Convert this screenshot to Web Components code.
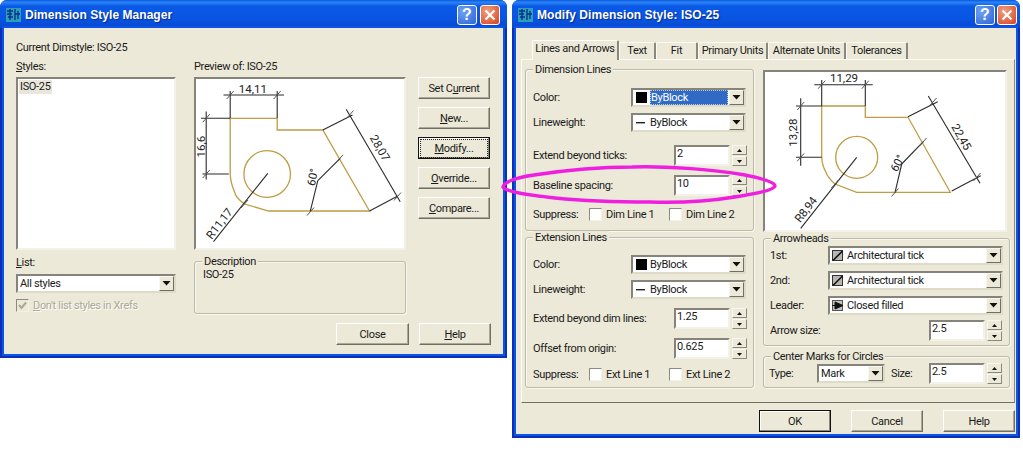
<!DOCTYPE html>
<html lang="en"><head><meta charset="utf-8"><title>Dimension Style</title>
<style>
html,body{margin:0;padding:0;background:#fff;width:1023px;height:451px;overflow:hidden;font:11px Roboto,"Liberation Sans",Arial,sans-serif;letter-spacing:-.33px;color:#1a1a1a}
</style></head><body>
<manager-dialog></manager-dialog>
<modify-dialog></modify-dialog>
<pink-ellipse></pink-ellipse>
<script>
function def(name, css, html, after){
  customElements.define(name, class extends HTMLElement{
    constructor(){super();this.attachShadow({mode:'open'});}
    connectedCallback(){
      if(this._done)return;this._done=true;
      this.shadowRoot.innerHTML='<style>'+css+'</style>'+(typeof html==='function'?html(this):html);
      if(after)after(this);
    }
  });
}
const ARROW='<svg width="9" height="5" viewBox="0 0 9 5"><path d="M0.5 0H8.5L4.5 4.5Z" fill="#111"/></svg>';
const ICONS={
 swatch:'<svg width="13" height="13"><rect x="1" y="1" width="11" height="11" fill="#000"/></svg>',
 line:'<svg width="13" height="13"><rect x="1" y="6" width="9" height="1.4" fill="#222"/></svg>',
 tick:'<svg width="13" height="13"><rect x=".5" y="1.5" width="10" height="10" fill="#b9b7b4" stroke="#333"/><path d="M1 11.5 10.5 2" stroke="#111" stroke-width="1.6"/></svg>',
 arrow:'<svg width="13" height="13"><rect x=".5" y="1.5" width="10" height="10" fill="#c4c2bc" stroke="#555"/><path d="M0 6.5H3M3 3 11 6.5 3 10Z" fill="#111" stroke="#111"/></svg>'
};
def('x-window',`
:host{display:block;position:absolute;box-sizing:border-box;background:#0a30b8;border-radius:7px 7px 0 0;overflow:hidden}
.bar{height:28px;display:flex;align-items:center;padding:1px var(--bar-right,3px) 0 6px;box-sizing:border-box;background:linear-gradient(180deg,#0a58e0 0,#2b84f6 8%,#0a5ae6 22%,#0854e2 70%,#0b46cd 100%);color:#fff;font:bold 12px "Liberation Sans",sans-serif;letter-spacing:.05px;text-shadow:1px 1px 1px #0a2a90}
.ico{width:15px;height:14px;margin-right:4px;flex:none;display:block}
.ttl{flex:1;white-space:nowrap}
.tb{width:20px;height:20px;border-radius:3px;border:1px solid #fff;box-sizing:border-box;margin-left:var(--bar-gap,2px);display:flex;align-items:center;justify-content:center;flex:none;font:bold 16px "Liberation Sans",sans-serif;color:#fff;text-shadow:none;background:radial-gradient(circle at 30% 30%,#6ea2f2,#2e64d8)}
.tb.x{background:radial-gradient(circle at 35% 30%,#f0a080,#d8421e)}
.body{position:absolute;left:4px;right:4px;top:28px;bottom:4px;background:#ece9d8;box-shadow:0 0 0 2px #0a55e6}
`,h=>`<div class="bar"><svg class="ico" viewBox="0 0 15 14"><rect width="15" height="14" fill="#2aa0bc"/><path d="M1 3H7M1 6H6M2 9H7M9 1V12M12 3V11M4 1V12M9 6H14" stroke="#0c2f86" stroke-width="1.3" fill="none"/></svg><span class="ttl">${h.getAttribute('heading')}</span><span class="tb">?</span><span class="tb x"><svg width="12" height="12"><path d="M1.5 1.5 10.5 10.5M10.5 1.5 1.5 10.5" stroke="#fff" stroke-width="2.2"/></svg></span></div><div class="body"><slot></slot></div>`);

def('x-btn',`
:host{display:flex;box-sizing:border-box;width:72px;height:22px;align-items:center;justify-content:center;background:#ece9d8;border:1px solid;border-color:#fff #716f64 #716f64 #fff;box-shadow:inset -1px -1px 0 #aca899;white-space:nowrap}
:host([primary]){border-color:#111;box-shadow:inset -1px -1px 0 #8a887c,inset 1px 1px 0 #fff}
:host([focus]) .t{outline:1px dotted #222;outline-offset:0;padding:2px 3px;width:60px;text-align:center}
`,`<span class="t"><slot></slot></span>`);

def('x-sunken',`
:host{display:block;box-sizing:border-box;background:#fff;border:2px solid;border-color:#86847a #f4f2e8 #f4f2e8 #86847a;overflow:hidden}
`,`<slot></slot>`);

def('x-combo',`
:host{display:block;box-sizing:border-box;height:19px;background:#fff;border:2px solid;border-color:#86847a #dedbc8 #dedbc8 #86847a}
.w{display:flex;height:100%;align-items:center}
.i{flex:none;width:14px;margin-left:2px;height:13px;display:block}
.t{flex:1;margin-left:1px;white-space:nowrap;overflow:hidden;line-height:13px;height:13px}
.sel .t{background:#316ac5;color:#fff;outline:1px dotted #bcd;outline-offset:-1px;margin:0 1px 0 1px;padding-left:1px;height:15px;line-height:15px}
.b{flex:none;width:15px;height:100%;box-sizing:border-box;background:#ece9d8;border:1px solid;border-color:#f8f7f0 #716f64 #716f64 #f8f7f0;display:flex;align-items:center;justify-content:center}
.n{width:1px;flex:none}
`,h=>{const ic=h.getAttribute('icon');return `<div class="w ${h.hasAttribute('selected')?'sel':''}">${ic?`<span class="i">${ICONS[ic]}</span>`:'<span class="n"></span>'}<span class="t"><slot></slot></span><span class="b">${ARROW}</span></div>`});

def('x-spin',`
:host{display:flex;width:73px;height:21px;gap:2px}
.f{flex:none;width:56px;box-sizing:border-box;background:#fff;border:2px solid;border-color:#86847a #f4f2e8 #f4f2e8 #86847a;padding:0 1px;line-height:14px}
.s{flex:1;display:flex;flex-direction:column;gap:1px}
.s span{flex:1;background:#ece9d8;border:1px solid;border-color:#f8f7f0 #8a887c #8a887c #f8f7f0;display:flex;align-items:center;justify-content:center}
`,h=>`<div class="f">${h.getAttribute('value')}</div><div class="s"><span><svg width="5" height="3"><path d="M2.5 0 5 3H0Z" fill="#111"/></svg></span><span><svg width="5" height="3"><path d="M0 0H5L2.5 3Z" fill="#111"/></svg></span></div>`);

def('x-check',`
:host{display:inline-flex;align-items:center;gap:4px;white-space:nowrap}
.b{width:13px;height:13px;box-sizing:border-box;flex:none;background:#fff;border:1px solid;border-color:#8d8b80 #f4f2e8 #f4f2e8 #8d8b80;display:block}
:host([disabled]){color:#aca899;text-shadow:1px 1px 0 #fff}
:host([disabled]) .b{background:#ece9d8}
`,h=>`<span class="b">${h.hasAttribute('checked')?'<svg width="11" height="11" style="display:block"><path d="M2 5 4.5 8 9 2.5" fill="none" stroke="#aca899" stroke-width="2"/></svg>':''}</span><span><slot></slot></span>`);

def('x-group',`
:host{display:block;box-sizing:border-box;position:relative;border:1px solid #bdbaa9;border-radius:3px;box-shadow:inset 1px 1px 0 #f8f7f0,1px 1px 0 #f8f7f0}
.l{position:absolute;left:7px;top:-7px;background:#ece9d8;padding:0 2px;line-height:13px;white-space:nowrap}
`,h=>`<span class="l">${h.getAttribute('legend')}</span><slot></slot>`);

const PREVIEWS={
 a:{vb:[197,79,207,169],shape:'M230.7 118.3H277.7V130H323.3L370 211H269L245 204Q236 198 235 191.7Q231 183 230.7 173.3Z',c:[267.7,174,23.3],
  lines:[[224,95,284.5,95],[230.7,118,230.7,91],[277.7,118,277.7,91],[206.7,111.5,206.7,179.5],[201.5,118.3,230.7,118.3],[203,174,229.3,174],[346.7,109.3,400.7,201.7],[323.3,130,353,115],[370,211,398.3,196],[310.7,211.7,318.3,180.7],[318.3,180.7,340.7,158.3],[268.3,173.3,214,241.7]],
  ticks:[[230.7,95],[277.7,95],[206.7,118.3],[206.7,174],[350.5,114.5],[398,196.5],[311,211.5],[340,158.8],[245,204]],
  text:[['14,11',253.3,93,0],['16,6',206,146.7,-90],['28,07',377,150,60],['60°',317,178,-78],['R11,17',223,226,-52]]},
 b:{vb:[765,72,240,158],shape:'M821.7 106H865.3V117.3H908L950.3 192.3H856.7L835 184Q828 178 825.7 171.7Q822 165 821.7 156.7Z',c:[856.7,157.3,21],
  lines:[[814.3,84.7,872.7,84.7],[821.7,106,821.7,80],[865.3,106,865.3,80],[800.7,98.3,800.7,165.7],[796,106,821.7,106],[796,157.3,821.7,157.3],[928.3,96,980,183.3],[908,116.7,937.7,101.7],[951.7,191,980.7,175.7],[895,192.7,901.7,164],[901.7,164,923.3,141.7],[856.7,157.3,800.7,228.3]],
  ticks:[[821.7,84.7],[865.3,84.7],[800.7,106],[800.7,157.3],[933,102],[977,177],[895,192.5],[923,142],[835,184]],
  text:[['11,29',844,81.5,0],['13,28',797,132.7,-90],['22,45',958,139,60],['60°',901,165,-62],['R8,94',809,212,-52]]}
};
def('dim-preview',`
:host{display:block;box-sizing:border-box;background:#fff;border:2px solid;border-color:#86847a #f4f2e8 #f4f2e8 #86847a;overflow:hidden}
svg{display:block;width:100%;height:100%}
text{font:11.5px Roboto,"Liberation Sans",sans-serif;letter-spacing:0;fill:#222;text-anchor:middle}
`,h=>{const p=PREVIEWS[h.getAttribute('drawing')];
 let s=`<svg viewBox="${p.vb.join(' ')}"><path d="${p.shape}" fill="none" stroke="#bf9c45" stroke-width="1.3"/><circle cx="${p.c[0]}" cy="${p.c[1]}" r="${p.c[2]}" fill="none" stroke="#bf9c45" stroke-width="1.3"/>`;
 p.lines.forEach(l=>s+=`<line x1="${l[0]}" y1="${l[1]}" x2="${l[2]}" y2="${l[3]}" stroke="#2a2a2a" stroke-width="1.1"/>`);
 p.ticks.forEach(t=>s+=`<line x1="${t[0]-3.5}" y1="${t[1]+4}" x2="${t[0]+3.5}" y2="${t[1]-4}" stroke="#555"/>`);
 p.text.forEach(t=>s+=`<text x="${t[1]}" y="${t[2]}" transform="rotate(${t[3]} ${t[1]} ${t[2]})">${t[0]}</text>`);
 return s+'</svg>';});

def('x-tabs',`
:host{display:flex;align-items:flex-end;height:21px;padding-left:11px;position:relative}
span{box-sizing:border-box;height:17px;line-height:15px;text-align:center;white-space:nowrap;background:#ece9d8;border-top:1px solid #fbfaf4;border-right:2px solid #8a887c;border-left:1px solid #fbfaf4;border-radius:2px 2px 0 0;flex:none}
span.on{height:20px;margin-bottom:-1px;border-left:1px solid #fff;border-top:1px solid #fff}
`,`<span class="on" style="width:87px">Lines and Arrows</span><span style="width:37px">Text</span><span style="width:42px">Fit</span><span style="width:70px">Primary Units</span><span style="width:78px">Alternate Units</span><span style="width:62px">Tolerances</span>`);

def('manager-dialog',`
:host{display:block}
x-window{left:0;top:0;width:507px;height:358px;--bar-right:7px;--bar-gap:3px}
.c{padding:13px 0 0 12px;display:flex;flex-direction:column;height:100%;box-sizing:border-box}
.cur{line-height:14px;height:14px}
.cols{display:flex;margin-top:5px}
.col{display:flex;flex-direction:column}
.l{width:160px;margin-right:18px}
.m{width:212px;margin-right:12px}
.r{width:72px;padding-top:17px;gap:8px;display:flex;flex-direction:column}
.lab{height:14px;line-height:14px;margin-bottom:3px}
.box{height:173px}
.item{margin:1px 0 0 1px;background:#e9e7dc;display:inline-block;padding:0 1px;line-height:14px}
.lab2{margin-top:6px;margin-bottom:4px;height:14px;line-height:14px}
x-check{margin-top:5px;height:14px}
x-group{margin-top:11px;height:53px;padding:6px 8px;line-height:14px}
.foot{display:flex;justify-content:flex-end;gap:10px;margin-top:9px;padding-right:12px}
.foot x-btn{width:73px}
.foot x-btn+x-btn{width:72px}
`,`<x-window heading="Dimension Style Manager"><div class="c">
<div class="cur">Current Dimstyle: ISO-25</div>
<div class="cols">
 <div class="col l"><div class="lab"><u>S</u>tyles:</div><x-sunken class="box"><span class="item">ISO-25</span></x-sunken>
  <div class="lab2"><u>L</u>ist:</div><x-combo>All styles</x-combo><x-check disabled checked><u>D</u>on't list styles in Xrefs</x-check></div>
 <div class="col m"><div class="lab">Preview of: ISO-25</div><dim-preview class="box" drawing="a"></dim-preview><x-group legend="Description">ISO-25</x-group></div>
 <div class="r"><x-btn>Set C<u>u</u>rrent</x-btn><x-btn><u>N</u>ew...</x-btn><x-btn primary focus><u>M</u>odify...</x-btn><x-btn><u>O</u>verride...</x-btn><x-btn><u>C</u>ompare...</x-btn></div>
</div>
<div class="foot"><x-btn>Close</x-btn><x-btn><u>H</u>elp</x-btn></div>
</div></x-window>`);

def('modify-dialog',`
:host{display:block}
x-window{left:512px;top:0;width:508px;height:438px}
.c{padding:10px 0 0 5px;box-sizing:border-box;height:100%}
.pane{box-sizing:border-box;width:494px;height:344px;border:1px solid;border-color:#fbfaf4 #8a887c #716f64 #fbfaf4;padding:9px 0 0 3px;display:flex;gap:9px}
.left{width:229px;display:flex;flex-direction:column;gap:6px}
.right{width:247px;display:flex;flex-direction:column}
.row{display:flex;align-items:center;white-space:nowrap}
.name{flex:none}
.g1{height:162px;padding:18px 0 0 7px}
.g2{height:151px;padding:17px 0 0 7px}
.n98{width:98px}.n142{width:141px}.n56{width:56px}
x-combo.c1{width:115px}
.h19{height:19px}.h21{height:21px}.h18{height:18px}
.mt6{margin-top:6px}.mt13{margin-top:13px}.mt9{margin-top:9px}.mt5{margin-top:5px}
.chk1{width:80px}
dim-preview{width:244px;height:162px;margin-top:1px}
.g3{height:108px;margin-top:6px;padding:7px 0 0 6px}
.g4{height:32px;margin-top:10px;padding:6px 0 0 5px}
.n58{width:58px}
x-combo.c2{width:175px}
.n159{width:159px}
.nT{width:48px}
.nS{width:38px;margin-left:6px}
x-combo.c3{width:68px}
.foot{display:flex;gap:20px;justify-content:flex-end;padding:7px 0 0;width:494px}
.foot x-btn{height:22px}
`,`<x-window heading="Modify Dimension Style: ISO-25"><div class="c">
<x-tabs></x-tabs>
<div class="pane">
 <div class="left">
  <x-group class="g1" legend="Dimension Lines">
   <div class="row h19"><span class="name n98">Color:</span><x-combo class="c1" icon="swatch" selected>ByBlock</x-combo></div>
   <div class="row h19 mt6"><span class="name n98">Lineweight:</span><x-combo class="c1" icon="line">ByBlock</x-combo></div>
   <div class="row h21 mt13"><span class="name n142">Extend beyond ticks:</span><x-spin value="2"></x-spin></div>
   <div class="row h21 mt9"><span class="name n142">Baseline spacing:</span><x-spin value="10"></x-spin></div>
   <div class="row h18 mt9"><span class="name n56">Suppress:</span><x-check class="chk1">Dim Line 1</x-check><x-check>Dim Line 2</x-check></div>
  </x-group>
  <x-group class="g2" legend="Extension Lines">
   <div class="row h19"><span class="name n98">Color:</span><x-combo class="c1" icon="swatch">ByBlock</x-combo></div>
   <div class="row h19 mt6"><span class="name n98">Lineweight:</span><x-combo class="c1" icon="line">ByBlock</x-combo></div>
   <div class="row h21 mt9"><span class="name n142">Extend beyond dim lines:</span><x-spin value="1.25"></x-spin></div>
   <div class="row h21 mt9"><span class="name n142">Offset from origin:</span><x-spin value="0.625"></x-spin></div>
   <div class="row h18 mt6"><span class="name n56">Suppress:</span><x-check class="chk1">Ext Line 1</x-check><x-check>Ext Line 2</x-check></div>
  </x-group>
 </div>
 <div class="right">
  <dim-preview drawing="b"></dim-preview>
  <x-group class="g3" legend="Arrowheads">
   <div class="row h19"><span class="name n58">1st:</span><x-combo class="c2" icon="tick">Architectural tick</x-combo></div>
   <div class="row h19 mt6"><span class="name n58">2nd:</span><x-combo class="c2" icon="tick">Architectural tick</x-combo></div>
   <div class="row h19 mt6"><span class="name n58">Leader:</span><x-combo class="c2" icon="arrow">Closed filled</x-combo></div>
   <div class="row h21 mt5"><span class="name n159">Arrow size:</span><x-spin value="2.5"></x-spin></div>
  </x-group>
  <x-group class="g4" legend="Center Marks for Circles">
   <div class="row h21"><span class="name nT">Type:</span><x-combo class="c3">Mark</x-combo><span class="name nS">Size:</span><x-spin value="2.5"></x-spin></div>
  </x-group>
 </div>
</div>
<div class="foot"><x-btn primary>OK</x-btn><x-btn>Cancel</x-btn><x-btn>Help</x-btn></div>
</div></x-window>`);

def('pink-ellipse',`
:host{position:absolute;left:495px;top:160px;width:290px;height:50px;pointer-events:none}
svg{display:block}
`,`<svg width="290" height="50" viewBox="495 160 290 50"><path d="M503 187C505 181 520 177 534 175C560 171 600 167 632 167C665 166 710 169 745 175C760 178 775 182 775 186C774 190 755 194 735 197C710 201 680 203 650 202C620 202 585 201 555 198C530 195 505 192 503 187Z" fill="none" stroke="#f01fe0" stroke-width="3.4"/></svg>`);
</script>
</body></html>
